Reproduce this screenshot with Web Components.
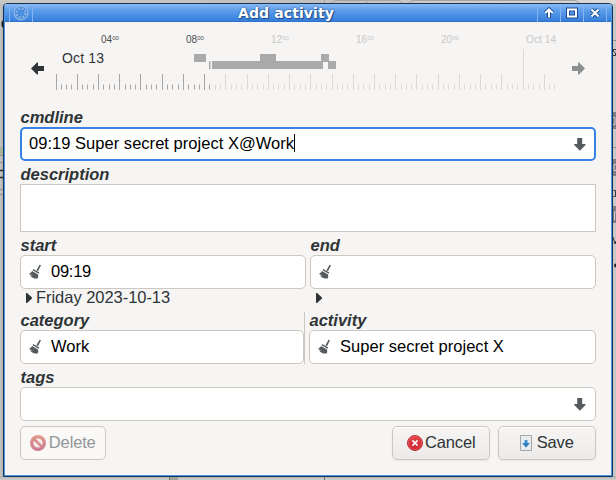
<!DOCTYPE html>
<html lang="en">
<head>
<meta charset="utf-8">
<title>Add activity</title>
<style>
  html, body { margin: 0; height: 100%; overflow: hidden; }
  body { font-family: "Liberation Sans", Arial, sans-serif; font-size: 16.5px; color: #2e3436; }
</style>
</head>
<body>
<desktop-view>
  <app-window caption="Add activity">
    <time-line></time-line>
    <form-field label="cmdline"><entry-box focused dropdown style="--ls:.03px">09:19 Super secret project X@Work</entry-box></form-field>
    <form-field label="description"><text-area></text-area></form-field>
    <field-row style="--cols:286px 286px;--gap:4px">
      <form-field label="start"><entry-box clearable style="--ls:-.25px">09:19</entry-box><date-expander>Friday 2023-10-13</date-expander></form-field>
      <form-field label="end"><entry-box clearable></entry-box><date-expander></date-expander></form-field>
    </field-row>
    <field-row divided style="--cols:284px 287px;--gap:5px">
      <form-field label="category"><entry-box clearable>Work</entry-box></form-field>
      <form-field label="activity"><entry-box clearable style="--ls:.03px">Super secret project X</entry-box></form-field>
    </field-row>
    <form-field label="tags"><entry-box dropdown></entry-box></form-field>
    <button-bar>
      <push-button icon="delete" disabled style="width:86px">Delete</push-button>
      <push-button icon="cancel" slot="end" style="width:98px">Cancel</push-button>
      <push-button icon="save" slot="end" style="width:98px">Save</push-button>
    </button-bar>
  </app-window>
</desktop-view>
<script>
const define = (name, render) => customElements.define(name, class extends HTMLElement {
  connectedCallback() {
    if (this.shadowRoot) return;
    const t = document.createElement('template');
    t.innerHTML = render(this);
    this.attachShadow({ mode: 'open' }).append(t.content.cloneNode(true));
  }
});

const icons = {
  down: `<svg width="12" height="14" viewBox="0 0 12 14"><path d="M3.2 1h5v6h3.3v1L5.9 13.8.2 8V7h3z" fill="#555b5d"/></svg>`,
  broom: `<svg width="13" height="15" viewBox="0 0 13 15"><path d="M10.6.7 12 1.3 9 7.2 7.4 6.3z" fill="#555b5d"/><path d="M4.2 5 10.3 8.4 9.6 9.7 3.6 6.3z" fill="#555b5d"/><path d="M3.1 7.1 9 10.4Q9.7 12.7 8.6 14.6L5.5 14.4Q2.3 13.8 1 11.6L3.7 11.2.6 10.5.5 9.2Q2.2 8.8 3.1 7.1z" fill="#555b5d"/></svg>`,
  delete: `<svg width="16" height="16" viewBox="0 0 16 16"><defs><linearGradient id="g" x2="0" y2="1"><stop stop-color="#e29b8b"/><stop offset="1" stop-color="#c97b92"/></linearGradient></defs><circle cx="8" cy="8" r="8" fill="url(#g)"/><circle cx="8" cy="8" r="4.6" fill="#f8efed"/><path d="M4.4 4.4 11.6 11.6" stroke="#d98b8c" stroke-width="2.7"/></svg>`,
  cancel: `<svg width="16" height="16" viewBox="0 0 16 16"><defs><linearGradient id="g" x2="0" y2="1"><stop stop-color="#e5444b"/><stop offset="1" stop-color="#cd252d"/></linearGradient></defs><circle cx="8" cy="8" r="7.5" fill="url(#g)" stroke="#b92e34"/><circle cx="8" cy="8" r="6.7" fill="none" stroke="#ee6a6c" stroke-width=".6"/><path d="M5.4 5.4 10.6 10.6M10.6 5.4 5.4 10.6" stroke="#fff" stroke-width="1.5"/></svg>`,
  save: `<svg width="12" height="16" viewBox="0 0 12 16"><defs><linearGradient id="g" x2="0" y2="1"><stop stop-color="#4a9bdc"/><stop offset="1" stop-color="#1b6cb0"/></linearGradient></defs><path d="M.5.5h11v15H.5z" fill="#e9ecee" stroke="#a3a6a8"/><path d="M4.5 5h3v3H10L6 12.5 2 8h2.5z" fill="url(#g)"/></svg>`
};

define('desktop-view', () => `
<style>
  :host { display: block; box-sizing: border-box; position: relative; width: 616px; height: 480px; padding: 3px; overflow: hidden; background: #c9c8c7; }
  .behind { position: absolute; left: 0; top: 0; }
  slot { display: block; position: relative; }
</style>
<svg class="behind" width="616" height="480">
  <defs>
    <linearGradient id="t"><stop stop-color="#c8c8c6"/><stop offset=".5" stop-color="#c0c0bf"/><stop offset="1" stop-color="#dcdad9"/></linearGradient>
    <linearGradient id="l"><stop stop-color="#c8c7c4"/><stop offset="1" stop-color="#aaa9a6"/></linearGradient>
    <linearGradient id="b" x2="0" y2="1"><stop stop-color="#afaeac"/><stop offset="1" stop-color="#d0cfce"/></linearGradient>
  </defs>
  <path d="M0 0h616v4H0z" fill="url(#t)"/>
  <path d="M0 4h4v476H0z" fill="url(#l)"/>
  <path d="M0 476h616v4H0z" fill="url(#b)"/>
  <path d="M0 147h3v8H0z" fill="#a7b59d"/>
  <path d="M0 155.500h3M0 162.500h3M0 189.500h3M0 194.500h3" stroke="#96928b"/>
  <path d="M0 170.500h3M0 177.500h3" stroke="#222b2d" stroke-width="1.600"/>
  <path d="M3 20 1.500 22v4L3 28z" fill="#222"/>
  <path d="M331.500 4Q333 .5 336 .5h62q3 0 4 3M366.500 0v4M408.500 4Q410 .5 413 .5h162q3 0 4 3M324.500 0v4" fill="none" stroke="#a5a4a2"/>
  <path d="M170 477h8v3h-8z" fill="#9aa596"/><path d="M169.500 477v3M324.500 477v3" stroke="#72756f"/>
  <path d="M613 40.500h3M613 147.500h3" stroke="#8d8c8a"/>
  <path d="M613 112h3v17h-3zM613 159h3v17h-3zM613 206h3v17h-3z" fill="#7d8080"/>
  <path d="M614.500 220v-8H616M613 117.500h2v7h-2M616 164.500h-2v6h2" fill="none" stroke="#cfcfcf"/>
  <circle cx="616" cy="265.500" r="2" fill="#222"/>
  <path d="M616 49.500h-2.500v2L615.500 53v2.500H613M613.500 190.500h2v6h-2M613 237l2 7 1-3" fill="none" stroke="#303436"/>
</svg>
<slot></slot>`);

define('app-window', el => `
<style>
  :host { display: block; box-sizing: border-box; width: 610px; height: 474px; border: 1px solid #15335b; border-radius: 4px 4px 0 0; background: #f6f5f4; overflow: hidden; }
  .frame { box-sizing: border-box; height: 472px; border: 1px solid #4d95e8; border-top: 0; }
  header { display: grid; grid-template-columns: 28px 1fr 69px 5px; height: 18px; background: linear-gradient(#8abaf2, #5d9ee9 35%, #3982df 90%, #2c6dc4); }
  h1 { margin: 0; padding-left: 2px; text-align: center; font: bold 14px/18px "DejaVu Sans", sans-serif; letter-spacing: .1px; color: #fff; text-shadow: 1px 1px 1px #1d4a8c, 0 0 2px #1d4a8c; }
  main { padding: 0 15px; }
</style>
<div class="frame">
<header>
  <svg width="28" height="18"><path d="M4.500 1v17M27.500 1v17" stroke="#84b5ef"/><circle cx="16" cy="9" r="6.800" fill="#4589dc" stroke="#91b9e4" stroke-width="1.200"/><circle cx="16" cy="9" r="4.500" fill="none" stroke="#86b3e6" stroke-width="2.200" stroke-dasharray="2.200 1.340"/><circle cx="16" cy="9" r="2.500" fill="#4f91e3"/></svg>
  <h1>${el.getAttribute('caption')}</h1>
  <svg width="74" height="18" style="overflow:visible"><path d="M.5 1v17M23.500 1v17M46.500 1v17M69.500 1v17" stroke="#84b5ef"/>
    <g fill="none" stroke="#1e4c8f" stroke-width="4"><path d="M12 14V6M8.500 9 12 5.500 15.500 9M31 5.500h8v7h-8zM54.500 5.500l7 7M61.500 5.500l-7 7"/></g>
    <g fill="none" stroke="#fff" stroke-width="2"><path d="M12 13.500V6M8.300 9 12 5.300 15.700 9M31 5.500h8v7h-8zM54.500 5.500l7 7M61.500 5.500l-7 7"/></g></svg>
</header>
<main><slot></slot></main>
</div>`);

define('time-line', () => {
  let ticks = '';
  for (let i = 0; i <= 94; i++) {
    const x = Math.floor(56 + i * 5.308) - 20 + .5, day = i === 88;
    ticks += `<path d="M${x} ${day ? 27 : i % 4 ? 62.5 : 52}V${i % 4 ? 67.500 : 68}" stroke="${i < 30 ? '#a6a7a6' : '#dbdad8'}"/>`;
  }
  const hour = (x, h, c) => `<text x="${x}" y="21" font-size="10" fill="${c}">${h}<tspan font-size="6" dy="-3">00</tspan></text>`;
  return `
<style>:host { display: block; height: 82px; } svg { display: block; overflow: visible; }</style>
<svg width="576" height="82" font-family="Liberation Sans">
  ${hour(81, '04', '#4a4f50')}${hour(166, '08', '#4a4f50')}${hour(251, '12', '#c8c8c6')}${hour(336, '16', '#c8c8c6')}${hour(421, '20', '#c8c8c6')}
  <text x="506" y="21" font-size="10" textLength="30" fill="#c8c8c6">Oct 14</text>
  <text x="42" y="41" font-size="14" textLength="42" fill="#2e3436">Oct 13</text>
  <path d="M174 32h12v8h-12zM189 39h1.500v8H189zM192 39h48v-7h16v7h47v8H192zM301 32h8v8h-8zM308 39h8v8h-8z" fill="#aaa"/>
  <path d="M191 27h1v1h-1z" fill="#ddd"/>
  ${ticks}
  <path d="M11 46.500 17 40.500h1V44h6v5h-6v3.500h-1z" fill="#2e3436"/>
  <path d="M565.500 46.500l-6-6h-1V44h-6v5h6v3.500h1z" transform="translate(-.5)" fill="#8b8f90"/>
</svg>`;
});

define('form-field', el => `
<style>
  :host { display: block; min-width: 0; }
  .label { box-sizing: border-box; height: 23px; padding: 4px 0 0 .5px; font-weight: bold; font-style: italic; line-height: 19px; white-space: nowrap; }
</style>
<div class="label">${el.getAttribute('label')}</div><slot></slot>`);

define('field-row', () => `
<style>
  :host { display: grid; grid-template-columns: var(--cols); gap: var(--gap); }
  :host([divided]) { background: linear-gradient(#cdc7c2, #cdc7c2) 284px 5px / 1px 100% no-repeat; }
</style><slot></slot>`);

define('entry-box', el => `
<style>
  :host { box-sizing: border-box; display: flex; align-items: center; height: 34px; border: 1px solid #cdc7c2; border-radius: 5px; background: #fff; padding: 0 9px 0 8px; color: #000; letter-spacing: var(--ls, 0); }
  :host([focused]) { border: 2px solid #3584e4; padding: 0 8px 0 7px; }
  .text { flex: 1; display: flex; align-items: center; padding-bottom: 2px; line-height: 19px; white-space: nowrap; }
  .caret { width: 1px; height: 18px; background: #000; }
  svg { display: block; flex: none; }
  .broom { margin: 0 9px 1px 0; }
</style>
${el.hasAttribute('clearable') ? `<span class="broom">${icons.broom}</span>` : ''}
<span class="text"><slot></slot>${el.hasAttribute('focused') ? '<i class="caret"></i>' : ''}</span>
${el.hasAttribute('dropdown') ? icons.down : ''}`);

define('text-area', () => `<style>:host { display: block; box-sizing: border-box; height: 48px; border: 1px solid #cdc7c2; background: #fff; }</style><slot></slot>`);

define('date-expander', () => `
<style>:host { display: flex; align-items: center; gap: 4px; height: 18px; padding-left: 6px; line-height: 18px; letter-spacing: -.04px; white-space: nowrap; } svg { flex: none; } span { padding-bottom: 2px; }</style>
<svg width="6" height="10"><path d="M0 0h1L6 4.500v1L1 10H0z" fill="#2e3436"/></svg><span><slot></slot></span>`);

define('button-bar', () => `
<style>:host, .end { display: flex; } :host { justify-content: space-between; padding-top: 5px; } .end { gap: 8px; }</style>
<slot></slot><div class="end"><slot name="end"></slot></div>`);

define('push-button', el => {
  const icon = el.getAttribute('icon');
  return `
<style>
  :host { box-sizing: border-box; display: flex; align-items: center; justify-content: center; gap: ${icon === 'save' ? 4.5 : 2.5}px; height: 34px; border: 1px solid #cdc7c2; border-radius: 5px; background: linear-gradient(#f6f5f3, #edebe9); box-shadow: 0 1px 2px rgba(0,0,0,.07), inset 0 1px #fff; line-height: 19px; letter-spacing: -.15px; }
  :host([disabled]) { background: #faf9f8; color: #929595; box-shadow: none; }
  svg { display: block; }
  span { padding-bottom: 2px; }
</style>
${icons[icon]}<span><slot></slot></span>`;
});
</script>
</body>
</html>
